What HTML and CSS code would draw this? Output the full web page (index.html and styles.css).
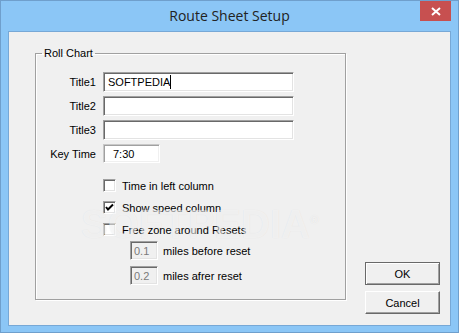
FILE: index.html
```html
<!DOCTYPE html>
<html lang="en">
<head>
  <meta charset="UTF-8">
  <title>Route Sheet Setup</title>
  <link rel="stylesheet" href="styles.css">
</head>
<body>

<div class="window">
  <div class="titlebar">
    <span></span>
    <div class="title">Route Sheet Setup</div>
    <div class="close">
      <svg width="10" height="9" viewBox="0 0 10 9"><path d="M1 1 L9 8 M9 1 L1 8" stroke="#fff" stroke-width="2" fill="none"/></svg>
    </div>
  </div>

  <div class="client">
    <fieldset class="group">
      <legend>Roll Chart</legend>

      <div class="fields">
        <label>Title1</label>
        <div class="edit wide">SOFTPEDIA<span class="caret"></span></div>
        <label>Title2</label>
        <div class="edit wide"></div>
        <label>Title3</label>
        <div class="edit wide"></div>
        <label>Key Time</label>
        <div class="edit short flat">7:30</div>
      </div>

      <div class="checks">
        <div class="check"><span class="box"></span>Time in left column</div>
        <div class="check"><span class="box checked">
          <svg width="9" height="9" viewBox="0 0 9 9"><path d="M1 4 L3 6.5 L8 1.5" stroke="#000" stroke-width="2" fill="none"/></svg>
        </span>Show speed column</div>
        <div class="check last"><span class="box"></span>Free zone around Resets</div>
        <div class="miles"><div class="edit tiny disabled">0.1</div>miles before reset</div>
        <div class="miles"><div class="edit tiny disabled">0.2</div>miles afrer reset</div>
      </div>
    </fieldset>

    <div class="actions">
      <button class="btn default">OK</button>
      <button class="btn">Cancel</button>
    </div>

    <div class="watermark">SOFTPEDIA<sup>®</sup></div>
  </div>
</div>

</body>
</html>
```

FILE: styles.css
```css
body {
  margin: 0;
  background: #ffffff;
  font-family: 'Liberation Sans', Arial, sans-serif;
  font-size: 11px;
  color: #000;
}

.window {
  width: 459px;
  height: 333px;
  box-sizing: border-box;
  background: #8bc6f6;
  border: 1px solid #6f9fcc;
  padding: 0 7px 6px 7px;
  display: flex;
  flex-direction: column;
}

.titlebar {
  height: 30px;
  flex-shrink: 0;
  display: grid;
  grid-template-columns: 1fr auto 1fr;
  align-items: start;
}

.title {
  font-family: 'Open Sans', sans-serif;
  font-size: 14px;
  color: #222;
  padding-top: 5px;
}

.close {
  justify-self: end;
  width: 31px;
  height: 20px;
  background: #c75050;
  display: flex;
  justify-content: center;
  align-items: center;
}

.client {
  position: relative;
  flex: 1;
  min-height: 0;
  background: #f0f0f0;
  border: 1px solid #77a8d6;
  display: flex;
  align-items: flex-start;
  padding: 15px 10px 0 26px;
}

.group {
  margin: 0;
  width: 311px;
  height: 253px;
  box-sizing: border-box;
  padding: 0;
  border: 1px solid #a0a0a0;
  box-shadow: inset 1px 1px 0 #fff, 1px 1px 0 #fff;
}

.group legend {
  margin-left: 6px;
  padding: 0 2px;
  line-height: 13px;
}

.fields {
  display: grid;
  grid-template-columns: 60px auto;
  column-gap: 7px;
  row-gap: 4px;
  align-items: center;
  margin-top: 12px;
}

.fields label {
  text-align: right;
}

.edit {
  box-sizing: border-box;
  height: 20px;
  background: #fff;
  border: 1px solid;
  border-color: #a0a0a0 #fff #fff #a0a0a0;
  box-shadow: inset 1px 1px 0 #696969, inset -1px -1px 0 #e3e3e3;
  padding: 3px 4px 0 4px;
  display: flex;
  align-items: flex-start;
}

.wide {
  width: 191px;
}

.short {
  width: 57px;
  height: 19px;
  padding-left: 9px;
}

.flat {
  border-color: #c8c8c8 #fff #fff #c8c8c8;
  box-shadow: inset 1px 1px 0 #a0a0a0, inset -1px -1px 0 #f0f0f0;
}

.caret {
  width: 1px;
  height: 14px;
  margin-top: -1px;
  background: #000;
}

.checks {
  display: flex;
  flex-direction: column;
  margin-top: 16px;
  padding-left: 67px;
}

.check {
  display: flex;
  align-items: center;
  gap: 6px;
  height: 13px;
  margin-bottom: 9px;
}

.check.last {
  margin-bottom: 5px;
}

.box {
  box-sizing: border-box;
  width: 13px;
  height: 13px;
  background: #fff;
  border: 1px solid;
  border-color: #a0a0a0 #fff #fff #a0a0a0;
  box-shadow: inset 1px 1px 0 #696969, inset -1px -1px 0 #e3e3e3;
  display: flex;
  justify-content: center;
  align-items: center;
}

.miles {
  display: flex;
  align-items: center;
  gap: 5px;
  padding-left: 27px;
  margin-bottom: 6px;
}

.tiny {
  width: 28px;
  height: 19px;
  padding-left: 3px;
}

.disabled {
  background: #f0f0f0;
  color: #7a7a7a;
}

.actions {
  display: flex;
  flex-direction: column;
  gap: 6px;
  margin-left: 19px;
  margin-top: 215px;
}

.btn {
  width: 75px;
  height: 23px;
  font-family: 'Liberation Sans', Arial, sans-serif;
  font-size: 11px;
  background: #f0f0f0;
  border: 1px solid;
  border-color: #fff #696969 #696969 #fff;
  box-shadow: inset -1px -1px 0 #a0a0a0;
  padding: 0;
}

.btn.default {
  border: 1px solid #696969;
  box-shadow: inset 1px 1px 0 #fff, inset -1px -1px 0 #a0a0a0;
}

.watermark {
  position: absolute;
  left: 72px;
  top: 170px;
  font-family: 'Liberation Sans', Arial, sans-serif;
  font-weight: bold;
  font-size: 40px;
  color: rgba(255, 255, 255, 0.55);
  text-shadow: 0 0 1px rgba(0, 0, 0, 0.08);
  pointer-events: none;
}

.watermark sup {
  font-size: 12px;
}
```
